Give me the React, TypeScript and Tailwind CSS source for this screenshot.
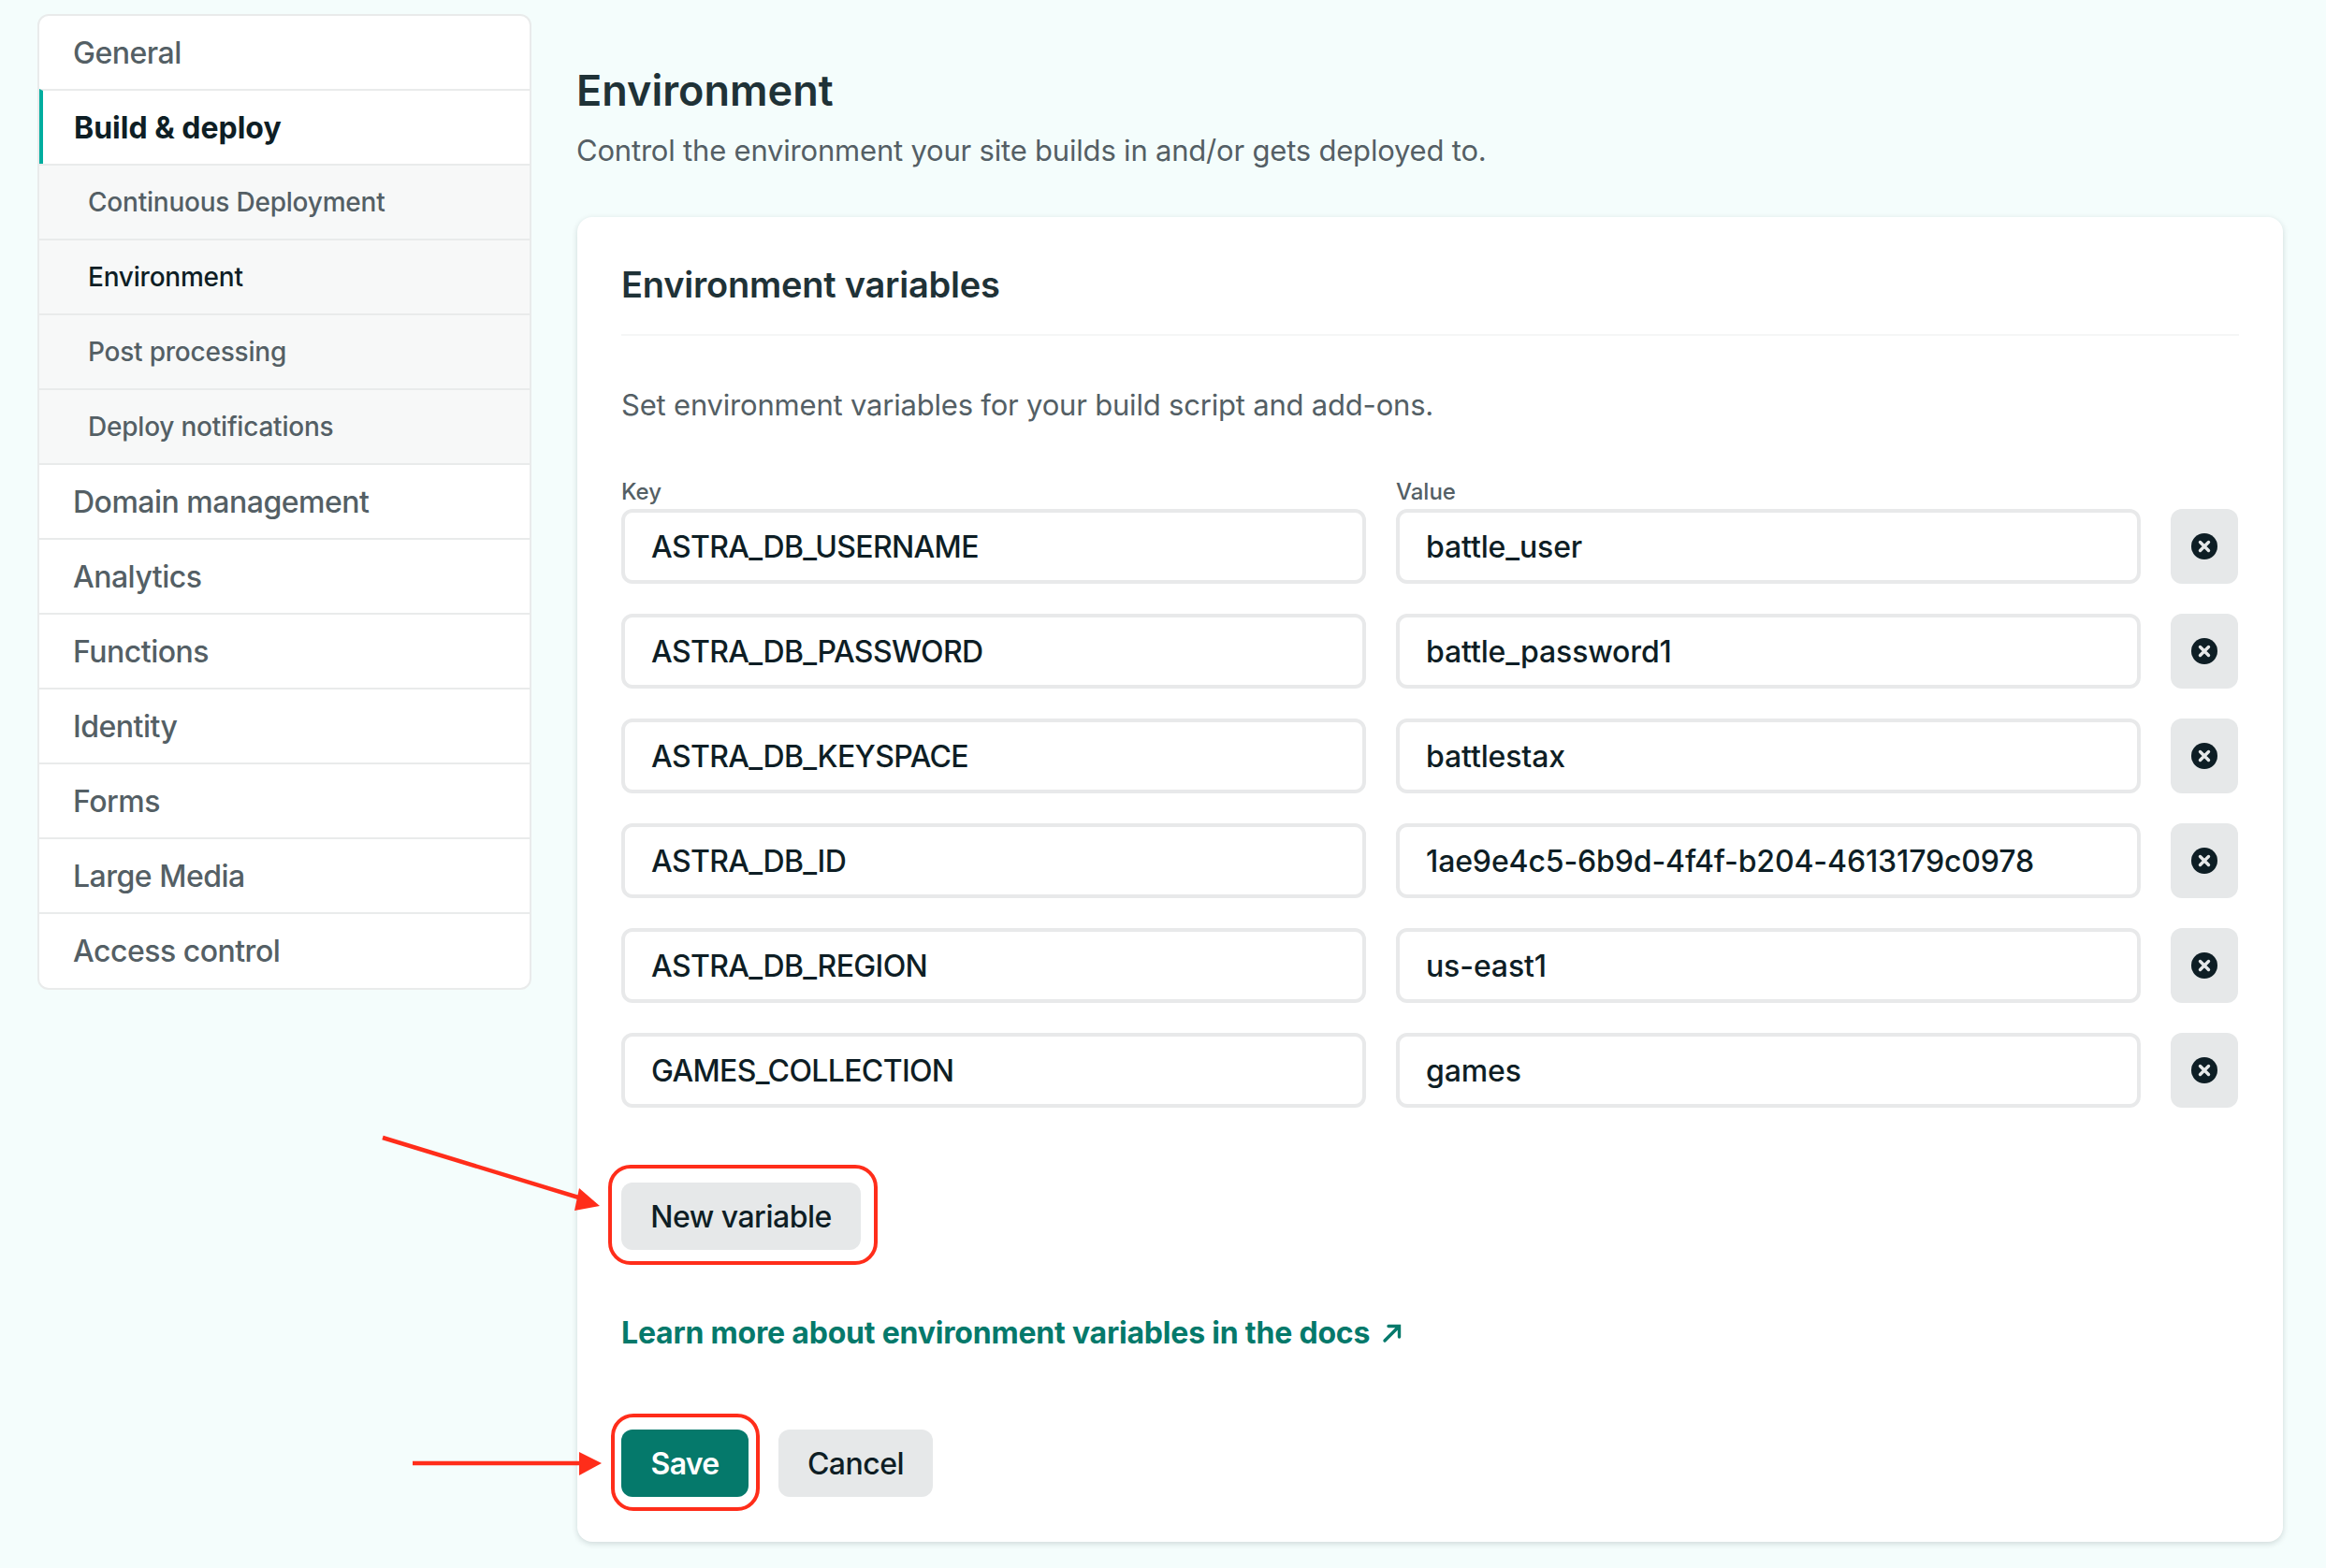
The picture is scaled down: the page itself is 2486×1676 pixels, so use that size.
import React from 'react';

const sideTop = ['Domain management', 'Analytics', 'Functions', 'Identity', 'Forms', 'Large Media', 'Access control'];
const subItems = ['Continuous Deployment', 'Environment', 'Post processing', 'Deploy notifications'];

const vars = [
  ['ASTRA_DB_USERNAME', 'battle_user'],
  ['ASTRA_DB_PASSWORD', 'battle_password1'],
  ['ASTRA_DB_KEYSPACE', 'battlestax'],
  ['ASTRA_DB_ID', '1ae9e4c5-6b9d-4f4f-b204-4613179c0978'],
  ['ASTRA_DB_REGION', 'us-east1'],
  ['GAMES_COLLECTION', 'games'],
];

const CloseIcon = () => (
  <svg width="28" height="28" viewBox="0 0 28 28">
    <circle cx="14" cy="14" r="14" fill="#0e1e25" />
    <path d="M9.5 9.5l9 9M18.5 9.5l-9 9" stroke="#e6e8e9" strokeWidth="3.4" strokeLinecap="round" />
  </svg>
);

const Field = ({ value, isKey }: { value: string; isKey?: boolean }) => (
  <div
    className={`flex h-[80px] items-center rounded-[12px] border-[4px] border-[#e8e9ea] bg-white pt-[2px] pl-[28px] text-[32px] font-medium text-[#0e1e25] ${isKey ? 'tracking-[-0.65px]' : 'tracking-[-0.13px]'}`}
  >
    {value}
  </div>
);

const Sidebar = () => (
  <div className="mt-[15px] h-[1043px] w-[528px] shrink-0 overflow-hidden rounded-[12px] border-[2px] border-[#e9ebeb] bg-white text-[32px] font-medium tracking-[-0.5px] text-[#545f65]">
    <div className="flex h-[78px] items-center pt-[2px] pl-[36px]">General</div>
    <div className="flex h-[80px] items-center border-t-[2px] border-[#e9ebeb] border-l-[4px] border-l-[#00ad9f] pt-[2px] pl-[33px] font-bold tracking-normal text-[#0e1e25]">
      Build &amp; deploy
    </div>
    {subItems.map((s) => (
      <div
        key={s}
        className={`flex h-[80px] items-center border-t-[2px] border-[#e9ebeb] bg-[#f7f8f8] pl-[52px] text-[28px] tracking-[-0.22px] ${s === 'Environment' ? 'text-[#0e1e25]' : ''}`}
      >
        {s}
      </div>
    ))}
    {sideTop.map((s) => (
      <div key={s} className="flex h-[80px] items-center border-t-[2px] border-[#e9ebeb] pt-[2px] pl-[36px]">
        {s}
      </div>
    ))}
  </div>
);

export default function App() {
  return (
    <div className="relative flex h-[1676px] w-[2486px] overflow-hidden bg-[#f4fdfc] pl-[40px] font-['Inter',sans-serif]">
      <Sidebar />
      <div className="ml-[49px] w-[1823px] shrink-0">
        <h1 className="mt-[67px] -ml-px text-[45px] leading-[60px] font-semibold text-[#1f3237]">Environment</h1>
        <p className="mt-[12px] -ml-px text-[31px] leading-[44px] tracking-[-0.2px] text-[#545f65]">
          Control the environment your site builds in and/or gets deployed to.
        </p>
        <div className="mt-[49px] h-[1416px] rounded-[16px] bg-white px-[47px] pt-[49px] shadow-[0_2px_6px_rgba(14,30,37,0.16)]">
          <h2 className="h-[78px] border-b-[2px] border-[#f5f6f6] text-[38px] leading-[46px] font-semibold tracking-[-0.23px] text-[#1f3237]">
            Environment variables
          </h2>
          <p className="mt-[52px] text-[31px] leading-[44px] tracking-[-0.2px] text-[#545f65]">
            Set environment variables for your build script and add-ons.
          </p>
          <div className="mt-[55px] grid grid-cols-[796px_796px_72px] gap-x-[32px] text-[24px] leading-[32px] font-medium text-[#545f65]">
            <div>Key</div>
            <div>Value</div>
          </div>
          <div className="mt-[2px] flex flex-col gap-[32px]">
            {vars.map(([k, v]) => (
              <div key={k} className="grid grid-cols-[796px_796px_72px] gap-x-[32px]">
                <Field value={k} isKey />
                <Field value={v} />
                <div className="flex h-[80px] items-center justify-center rounded-[12px] bg-[#e6e8e9]">
                  <CloseIcon />
                </div>
              </div>
            ))}
          </div>
          <div className="relative mt-[80px] h-[72px] w-[256px]">
            <button className="h-full w-full rounded-[12px] bg-[#e6e8e9] pt-[2px] text-[32px] font-medium tracking-[-0.5px] text-[#0e1e25]">
              New variable
            </button>
            <span className="absolute top-[-19px] right-[-18px] bottom-[-16px] left-[-14px] rounded-[24px] border-[4.5px] border-[#ff2d1a]" />
          </div>
          <a className="mt-[69px] flex items-center gap-[12px] text-[32px] leading-[40px] font-bold tracking-[-0.2px] text-[#05796b]">
            Learn more about environment variables in the docs
            <svg width="24" height="24" viewBox="0 0 24 24" fill="none" stroke="#05796b" strokeWidth="3.4" strokeLinecap="round">
              <path d="M4 20L19 5M8 4.500h11.500V16" />
            </svg>
          </a>
          <div className="mt-[83px] flex gap-[32px]">
            <div className="relative h-[72px] w-[136px]">
              <button className="h-full w-full rounded-[12px] bg-[#05796b] pt-[2px] text-[32px] font-semibold tracking-[-0.7px] text-white">Save</button>
              <span className="absolute top-[-17px] right-[-12px] bottom-[-15px] left-[-11px] rounded-[24px] border-[4.5px] border-[#ff2d1a]" />
            </div>
            <button className="h-[72px] w-[165px] rounded-[12px] bg-[#e6e8e9] pt-[2px] text-[32px] font-medium tracking-[-0.5px] text-[#0e1e25]">Cancel</button>
          </div>
        </div>
      </div>
      {/* annotation arrows */}
      <svg className="absolute top-0 left-0" width="2486" height="1676" fill="none">
        <path d="M409 1216L625 1282" stroke="#ff2d1a" strokeWidth="4.500" />
        <path d="M641 1289L619 1270L614 1294Z" fill="#ff2d1a" />
        <path d="M441 1564H622" stroke="#ff2d1a" strokeWidth="4.500" />
        <path d="M643 1564L619 1552V1577Z" fill="#ff2d1a" />
      </svg>
    </div>
  );
}
